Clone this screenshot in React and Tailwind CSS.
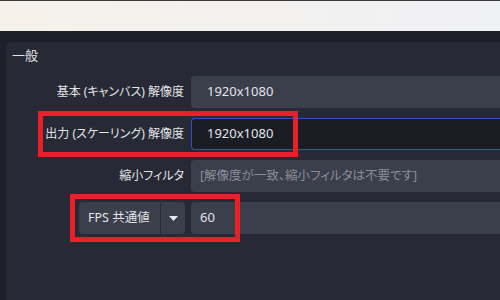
export default function App() {
  const font = "font-['Noto_Sans','Noto_Sans_CJK_JP',sans-serif] [font-feature-settings:'palt']"
  return (
    <div className={`relative w-[500px] h-[300px] overflow-hidden bg-[#1e2029] text-[#e2e4e9] ${font}`}>
      {/* light strip of the window above */}
      <div className="h-[31px] border-t border-[#3a3a3a] bg-gradient-to-r from-[#f6f2ea] to-[#f0f1f5]" />
      <div className="pt-[11px] pl-[6px] h-full">
        <div className="h-full bg-[#272a34] rounded-tl-[6px]">
          <div className="pt-[4px] pl-[6px] text-[13px] leading-[18px]">一般</div>
          <div className="mt-[12px] flex flex-col gap-[10px]">
            <div className="flex items-center gap-[6px]">
              <div className="w-[179px] text-right text-[12px] pr-[1px]">基本 (キャンバス) 解像度</div>
              <div className="flex-1 h-[32px] rounded-l-[4px] bg-[#3b3e4b] flex items-center pl-[16px] text-[13px]">1920x1080</div>
            </div>
            <div className="flex items-center gap-[6px]">
              <div className="w-[179px] text-right text-[12px] pr-[1px]">出力 (スケーリング) 解像度</div>
              <div className="flex-1 h-[32px] rounded-l-[4px] bg-[#1b1d25] border border-r-0 border-[#2c52cc] flex items-center pl-[15px] text-[13px]">1920x1080</div>
            </div>
            <div className="flex items-center gap-[6px]">
              <div className="w-[179px] text-right text-[12px] pr-[1px]">縮小フィルタ</div>
              <div className="flex-1 h-[32px] rounded-l-[4px] bg-[#3b3e4b] flex items-center pl-[9px] text-[12.5px] text-[#8b8e98]">[解像度が一致、縮小フィルタは不要です]</div>
            </div>
            <div className="flex items-center gap-[6px]">
              <div className="w-[179px] flex justify-end">
                <div className="w-[106px] h-[32px] rounded-[4px] bg-[#3b3e4b] flex items-center">
                  <div className="w-[82px] h-full flex items-center pl-[9px] text-[12.5px] border-r border-[#2a2c35]">FPS 共通値</div>
                  <div className="flex-1 flex items-center justify-center">
                    <svg width="9" height="5" viewBox="0 0 9 5"><path d="M0 0h9L4.5 5z" fill="#e8e9ee" /></svg>
                  </div>
                </div>
              </div>
              <div className="flex-1 h-[32px] rounded-l-[4px] bg-[#3b3e4b] flex items-center pl-[9px] text-[13px]">60</div>
            </div>
          </div>
        </div>
      </div>
      {/* red highlight boxes */}
      <div className="absolute left-[38px] top-[111px] w-[260px] h-[46px] border-[5px] border-[#e8202a]" />
      <div className="absolute left-[70px] top-[194px] w-[170px] h-[48px] border-[5px] border-[#e8202a]" />
    </div>
  )
}
